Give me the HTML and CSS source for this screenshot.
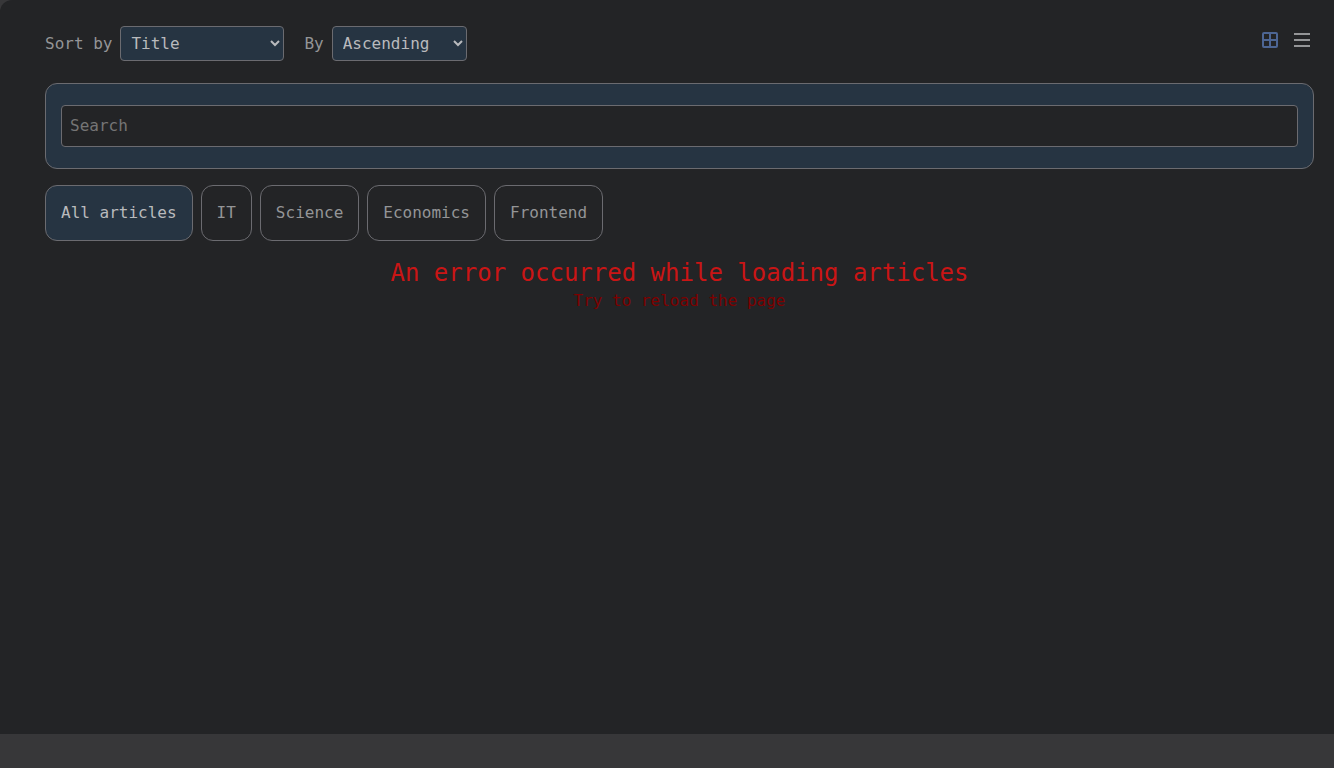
FILE: index.html
```html
<!DOCTYPE html>
<html lang="en">
<head>
<meta charset="utf-8">
<meta name="viewport" content="width=device-width, initial-scale=1">
<title>Articles</title>
<link rel="stylesheet" href="styles.css">
</head>
<body>
<main class="page">
  <div class="toolbar">
    <div class="sort">
      <div class="field">
        <label for="sort">Sort by</label>
        <select class="select" id="sort">
          <option>Title</option>
          <option>Creation date</option>
          <option>Views</option>
        </select>
      </div>
      <div class="field">
        <label for="order">By</label>
        <select class="select" id="order">
          <option>Ascending</option>
          <option>Descending</option>
        </select>
      </div>
    </div>
    <div class="views">
      <button class="view view-active" type="button" aria-label="Grid view">
        <svg width="16" height="16" viewBox="0 0 16 16" fill="none" stroke="currentColor" stroke-width="2"><rect x="1" y="1" width="14" height="14" rx="1"/><path d="M8 1v14M1 8h14"/></svg>
      </button>
      <button class="view" type="button" aria-label="List view">
        <svg width="16" height="16" viewBox="0 0 16 16" fill="currentColor"><path d="M0 1h16v2H0zM0 7h16v2H0zM0 13h16v2H0z"/></svg>
      </button>
    </div>
  </div>
  <div class="search">
    <input class="search-input" type="text" placeholder="Search" aria-label="Search">
  </div>
  <div class="tabs">
    <button class="tab tab-active" type="button">All articles</button>
    <button class="tab" type="button">IT</button>
    <button class="tab" type="button">Science</button>
    <button class="tab" type="button">Economics</button>
    <button class="tab" type="button">Frontend</button>
  </div>
  <div class="error">
    <p class="error-title">An error occurred while loading articles</p>
    <p class="error-text">Try to reload the page</p>
  </div>
</main>
</body>
</html>
```
FILE: styles.css
```css
* {
  box-sizing: border-box;
  margin: 0;
}

body {
  background: #373739;
  color: #949597;
  font: 16px/24px "DejaVu Sans Mono", monospace;
}

button,
input,
select {
  font: inherit;
  color: inherit;
}

.page {
  min-height: calc(100vh - 34px);
  padding: 26px 20px 20px 45px;
  background: #232426;
  border-top-left-radius: 12px;
}

.toolbar {
  display: flex;
  justify-content: space-between;
  align-items: flex-start;
  margin-bottom: 22px;
}

.sort {
  display: flex;
  gap: 20px;
}

.field {
  display: flex;
  align-items: center;
  gap: 8px;
}

.select {
  height: 35px;
  padding: 0 10px 0 6px;
  border: 1px solid #6b6b70;
  border-radius: 4px;
  background: #263442;
  color: #b9babd;
}

.views {
  display: flex;
  gap: 16px;
  padding: 6px 4px 0 0;
}

.view {
  display: flex;
  padding: 0;
  border: 0;
  background: none;
}

.view-active {
  color: #4d6694;
}

.search {
  padding: 21px 15px;
  border: 1px solid #6b6b70;
  border-radius: 12px;
  background: #263442;
}

.search-input {
  display: block;
  width: 100%;
  height: 42px;
  padding: 0 8px 2px;
  border: 1px solid #6b6b70;
  border-radius: 4px;
  background: #232426;
}

.search-input::placeholder {
  color: #757575;
}

.tabs {
  display: flex;
  flex-wrap: wrap;
  gap: 8px;
  margin: 16px 0;
}

.tab {
  padding: 15px;
  border: 1px solid #6b6b70;
  border-radius: 12px;
  background: none;
}

.tab-active {
  background: #263442;
  color: #b9babd;
}

.error {
  text-align: center;
}

.error-title {
  color: #ca1515;
  font-size: 24px;
  line-height: 32px;
}

.error-text {
  color: #7d0000;
}
```
